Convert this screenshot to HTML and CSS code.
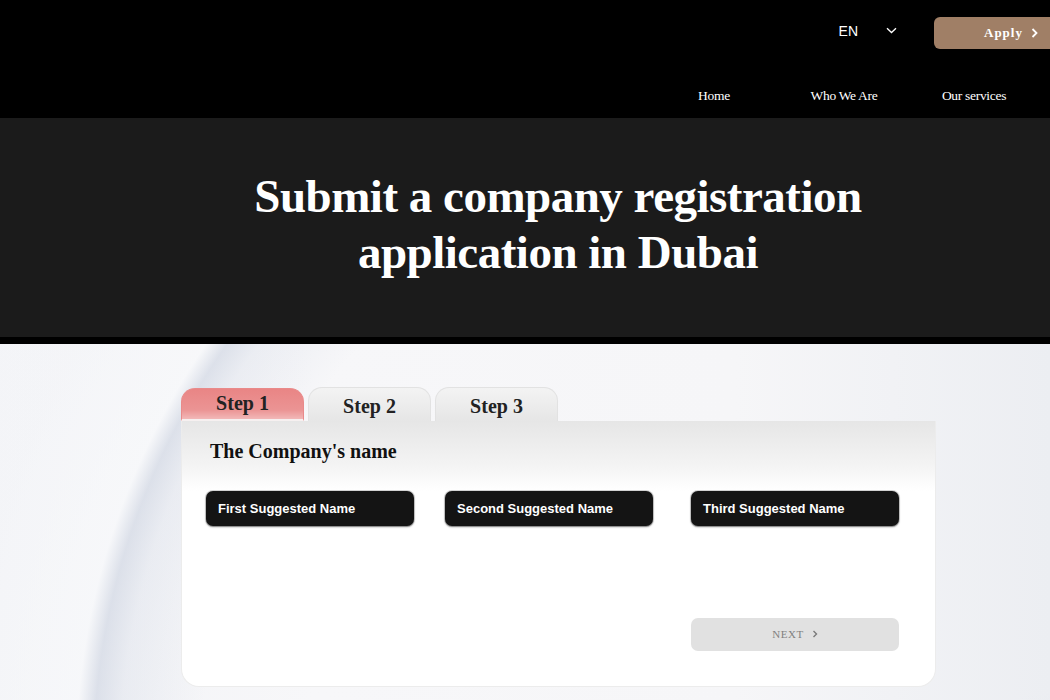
FILE: index.html
```html
<!DOCTYPE html>
<html lang="en">
<head>
<meta charset="utf-8">
<title>Company registration</title>
<link rel="stylesheet" href="styles.css">
</head>
<body>
<header class="site-header">
  <div class="header-top">
    <div class="lang">
      <span class="lang-code">EN</span>
      <svg class="lang-caret" width="11" height="7" viewBox="0 0 11 7"><path d="M1 1.2 L5.5 5.5 L10 1.2" fill="none" stroke="#fff" stroke-width="1.3"/></svg>
    </div>
    <a class="apply-btn" href="#">Apply
      <svg class="apply-caret" width="7" height="10" viewBox="0 0 7 10"><path d="M1.5 1 L5.5 5 L1.5 9" fill="none" stroke="#fff" stroke-width="1.8"/></svg>
    </a>
  </div>
  <nav class="main-nav">
    <a href="#">Home</a>
    <a href="#">Who We Are</a>
    <a href="#">Our services</a>
  </nav>
</header>

<section class="hero">
  <h1>Submit a company registration<br>application in Dubai</h1>
</section>

<main class="form-area">
  <div class="wizard">
    <div class="tabs">
      <div class="tab active">Step 1</div>
      <div class="tab">Step 2</div>
      <div class="tab">Step 3</div>
    </div>
    <div class="card">
      <h2>The Company's name</h2>
      <div class="fields">
        <div class="field">First Suggested Name</div>
        <div class="field">Second Suggested Name</div>
        <div class="field">Third Suggested Name</div>
      </div>
      <div class="actions">
        <button class="next-btn">NEXT
          <svg width="6" height="8" viewBox="0 0 6 8"><path d="M1.5 1 L4.5 4 L1.5 7" fill="none" stroke="#7a7a7a" stroke-width="1.4"/></svg>
        </button>
      </div>
    </div>
  </div>
</main>
</body>
</html>
```
FILE: styles.css
```css
* { box-sizing: border-box; }
html, body { margin: 0; padding: 0; }
body {
  width: 1050px;
  height: 700px;
  overflow: hidden;
  font-family: "Liberation Serif", "Times New Roman", serif;
  background: #f3f4f7;
}
.site-header {
  background: #000;
  height: 118px;
  overflow: hidden;
  display: flex;
  flex-direction: column;
}
.header-top {
  display: flex;
  justify-content: flex-end;
  align-items: center;
  padding-top: 17px;
  height: 49px;
  margin-right: -30px;
}
.lang {
  display: flex;
  align-items: center;
  gap: 28px;
  margin-right: 37px;
  padding-bottom: 5px;
}
.lang-code {
  font-family: "Liberation Sans", Arial, sans-serif;
  color: #fff;
  font-size: 14px;
}
.apply-btn {
  width: 146px;
  height: 32px;
  background: #a07f66;
  border-radius: 6px;
  color: #fff;
  text-decoration: none;
  font-weight: bold;
  font-size: 13px;
  letter-spacing: 1px;
  display: flex;
  align-items: center;
  padding-left: 50px;
  gap: 8px;
}
.main-nav {
  display: flex;
  justify-content: flex-end;
  padding-right: 11px;
  margin-top: 39px;
}
.main-nav a {
  width: 130px;
  text-align: center;
  color: #fff;
  text-decoration: none;
  font-size: 13.5px;
  letter-spacing: -0.3px;
}
.hero {
  background: #1b1b1b;
  height: 226px;
  border-bottom: 7px solid #000;
  padding-top: 50px;
  padding-left: 66px;
}
.hero h1 {
  margin: 0;
  text-align: center;
  color: #fff;
  font-size: 47px;
  line-height: 56px;
  font-weight: bold;
  letter-spacing: -0.5px;
}
.form-area {
  height: 356px;
  padding-top: 43px;
  background:
    radial-gradient(ellipse 812px 760px at 900px 416px, rgba(255,255,255,0) 0, rgba(255,255,255,0) 86%, rgba(206,213,227,0.28) 96%, rgba(196,204,220,0.5) 99.3%, rgba(248,249,251,0.7) 101.5%, rgba(246,247,250,0.4) 115%),
    radial-gradient(ellipse 520px 420px at 1150px 760px, #c3c9d7 0, rgba(210,214,227,0.6) 45%, rgba(240,241,245,0) 100%),
    linear-gradient(90deg, #f2f3f6 0, #f7f7f9 30%, #f6f6f8 70%, #eceef2 100%);
}
.wizard {
  width: 755px;
  margin-left: 181px;
}
.tabs {
  display: flex;
  gap: 4px;
  align-items: flex-end;
  height: 34px;
}
.tab {
  width: 123px;
  height: 34px;
  border-radius: 14px 14px 0 0;
  background: linear-gradient(#f3f3f3, #e6e6e6);
  border: 1px solid #e2e2e2;
  border-bottom: none;
  text-align: center;
  font-weight: bold;
  font-size: 20px;
  color: #222;
  padding-top: 7px;
}
.tab.active {
  height: 33px;
  background: linear-gradient(#e98585, #eb9494 70%, #f2b8b8);
  border-color: #e98a8a;
  padding-top: 3px;
  border-bottom: 2px solid #f6f0f0;
}
.card {
  height: 266px;
  background: linear-gradient(#e6e6e6 0, #f4f4f4 45px, #fff 70px, #fff 100%);
  border: 1px solid #ececec;
  border-top: none;
  border-radius: 0 0 18px 18px;
  padding: 17px 36px 0 24px;
}
.card h2 {
  margin: 0 0 0 4px;
  font-size: 20px;
  font-weight: bold;
  color: #111;
  line-height: 26px;
}
.fields {
  display: flex;
  margin-top: 27px;
}
.field {
  width: 208px;
  height: 35px;
  background: #141414;
  border-radius: 7px;
  box-shadow: 0 1px 2px rgba(0,0,0,0.45), 0 0 0 1px #d8d8d8;
  color: #fff;
  font-family: "Liberation Sans", Arial, sans-serif;
  font-weight: bold;
  font-size: 13px;
  display: flex;
  align-items: center;
  padding-left: 12px;
}
.field:nth-child(1) { margin-right: 31px; }
.field:nth-child(2) { margin-right: 38px; }
.actions {
  display: flex;
  justify-content: flex-end;
  margin-top: 92px;
}
.next-btn {
  width: 208px;
  height: 33px;
  border: none;
  border-radius: 7px;
  background: #e1e1e1;
  color: #808080;
  font-family: "Liberation Serif", "Times New Roman", serif;
  font-size: 11px;
  letter-spacing: 0.5px;
  display: flex;
  align-items: center;
  justify-content: center;
  gap: 8px;
  padding: 0 0 2px 0;
}
```
